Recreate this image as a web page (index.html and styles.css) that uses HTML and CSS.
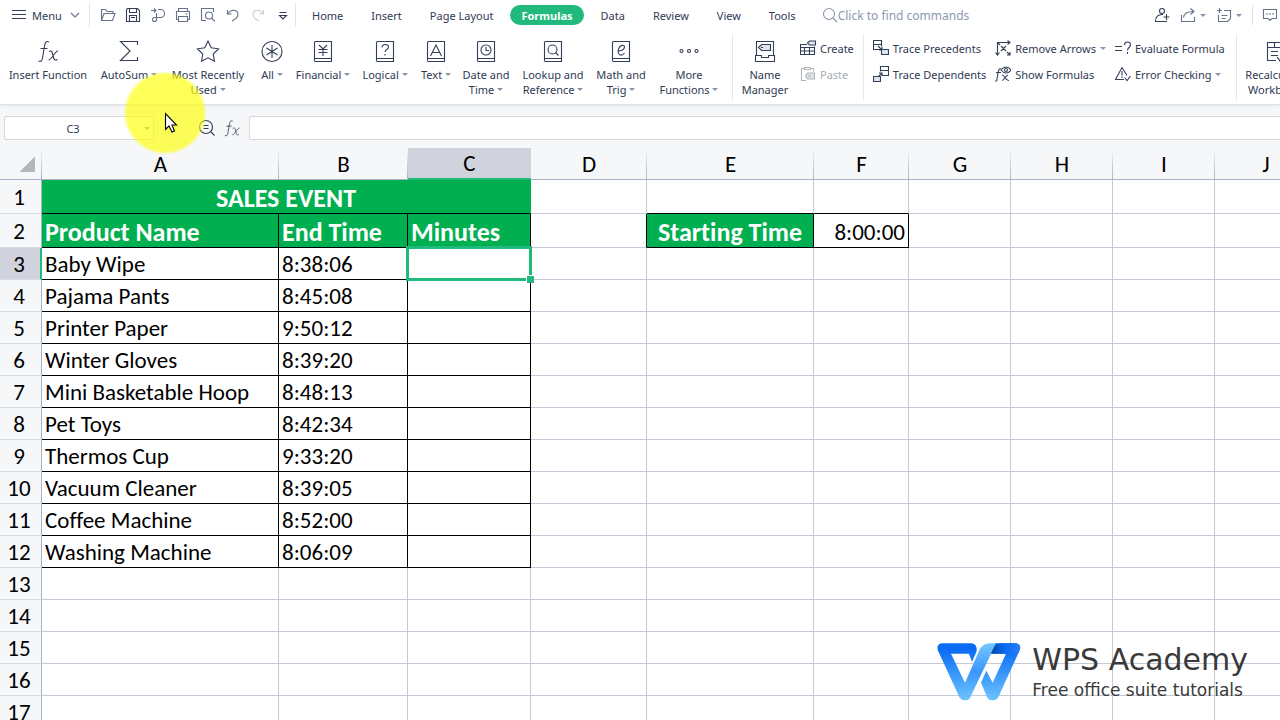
FILE: index.html
```
<!DOCTYPE html>
<html lang="en">
<head>
    <meta charset="UTF-8">
    <meta name="viewport" content="width=device-width, initial-scale=1.0">
    <title>Sales Event</title>
    <link rel="stylesheet" href="styles.css">
</head>
<body>
    <!-- Shared icon shapes -->
    <svg class="defs" aria-hidden="true">
        <symbol id="book" viewBox="0 0 24 24">
            <path d="M3.500 21V3.500a1 1 0 0 1 1-1h16v20h-16a1 1 0 0 1-1-1.500M3.500 19.500h17"/>
        </symbol>
    </svg>

    <header>
        <div class="topbar">
            <button class="menu">
                <svg width="14" height="14" viewBox="0 0 14 14"><path d="M0 2.500h14M0 6.500h14M0 10.500h14"/></svg>
                Menu
                <svg class="soft" width="10" height="10" viewBox="0 0 10 10"><path d="M1 3l4 4 4-4"/></svg>
            </button>
            <div class="quick">
                <button aria-label="Open"><svg class="soft" width="16" height="16" viewBox="0 0 16 16"><path d="M1.500 13.500v-11h4l1.500 2h6v2M1.500 13.500l2.500-7h11l-2.500 7z"/></svg></button>
                <button aria-label="Save"><svg width="16" height="16" viewBox="0 0 16 16"><path d="M1.500 14.500v-12l1-1h10l2 2v11zM4.500 1.500v4h7v-4M4.500 14.500v-6h7v6M6 10.500h4"/></svg></button>
                <button aria-label="Export"><svg class="soft" width="16" height="16" viewBox="0 0 16 16"><path d="M1 3.500h4.500M4 1.500l2 2-2 2M8 2.500h2.500a4 4 0 0 1 0 8H4.500a2 2 0 1 0 2 2V6"/></svg></button>
                <button aria-label="Print"><svg class="soft" width="16" height="16" viewBox="0 0 16 16"><path d="M3.500 4.500v-3h9v3M3.500 12.500h-2v-8h13v8h-2M3.500 9.500h9v5h-9zM10.500 7h2"/></svg></button>
                <button aria-label="Print preview"><svg class="soft" width="16" height="16" viewBox="0 0 16 16"><path d="M6 13.500H1.500v-12h12V5"/><circle cx="9" cy="8.500" r="3.500"/><path d="M11.500 11l3.500 3.500"/></svg></button>
                <button aria-label="Undo"><svg class="soft" width="16" height="16" viewBox="0 0 16 16"><path d="M2.500 3v4h4M3 6.500c3-5 10-4 10 1 0 3-3 5-6 6.500"/></svg></button>
                <button aria-label="Redo" disabled><svg class="faded" width="16" height="16" viewBox="0 0 16 16"><path d="M13.500 3v4h-4M13 6.500c-3-5-10-4-10 1 0 3 3 5 6 6.500"/></svg></button>
                <button aria-label="Customize toolbar"><svg width="16" height="16" viewBox="0 0 16 16"><path d="M4.500 5.500h7M4.500 8.500h7L8 12z"/></svg></button>
            </div>
            <nav class="tabs">
                <button>Home</button>
                <button>Insert</button>
                <button>Page Layout</button>
                <button class="active">Formulas</button>
                <button>Data</button>
                <button>Review</button>
                <button>View</button>
                <button>Tools</button>
            </nav>
            <label class="search">
                <svg width="16" height="16" viewBox="0 0 16 16"><circle cx="7" cy="7" r="5.500"/><path d="M11 11l4 4"/></svg>
                <input type="text" placeholder="Click to find commands" aria-label="Find commands">
            </label>
            <div class="share">
                <button aria-label="Add user"><svg width="16" height="16" viewBox="0 0 16 16"><circle cx="8" cy="4" r="2.500"/><path d="M9 7.500C4 7 1.500 10 1.500 14.500H13M12.500 7v6M9.500 10h6"/></svg></button>
                <button aria-label="Share"><svg class="soft" width="16" height="16" viewBox="0 0 16 16"><path d="M1.500 8v6.500h13V10M3.500 10.500c.500-4 4-6 10-6M10.500 1.500l3.500 3-3.500 3"/></svg><i class="arrow"></i></button>
                <button aria-label="Add note"><svg class="soft" width="16" height="16" viewBox="0 0 16 16"><path d="M1 3.500h5M3.500 1v5M8 3.500h6.500v8l-3 3h-9V8M5.500 8.500h6M5.500 11.500h4"/></svg><i class="arrow"></i></button>
                <button class="chat" aria-label="Comments"><svg class="soft" width="16" height="16" viewBox="0 0 16 16"><path d="M1.500 2.500h13v9H10l-2 2-2-2H1.500zM4 7h2M7 7h2M10 7h2"/></svg></button>
            </div>
        </div>

        <div class="ribbon">
            <button class="tool w96">
                <svg width="24" height="24" viewBox="0 0 24 24"><path d="M13 3c-3-1.500-4 1-4.500 4L6.500 19c-.500 3-1.500 4-4 3M4.500 9.500h7M13 12.500c3-1.500 3 0 4 4s1.500 5.500 4.500 4M22 12c-3 0-6 8.500-9.500 9"/></svg>
                <span>Insert Function</span>
            </button>
            <button class="tool w66">
                <svg width="24" height="24" viewBox="0 0 24 24"><path d="M20.500 6V2.500h-17L13 12 3.500 21.500h17V18"/></svg>
                <span>AutoSum <i class="arrow"></i></span>
            </button>
            <button class="tool w92">
                <svg width="24" height="24" viewBox="0 0 24 24"><path d="M12 2l3.200 6.800 7.300 1-5.300 5.200 1.300 7.300L12 18.800l-6.500 3.500 1.300-7.300L1.500 9.800l7.300-1z"/></svg>
                <span>Most Recently<br>Used <i class="arrow"></i></span>
            </button>
            <button class="tool w36">
                <svg width="24" height="24" viewBox="0 0 24 24"><circle cx="12" cy="12.500" r="10"/><path d="M12 6v13M6.500 9l11 7M17.500 9l-11 7"/></svg>
                <span>All <i class="arrow"></i></span>
            </button>
            <button class="tool w66">
                <svg width="24" height="24" viewBox="0 0 24 24"><use href="#book"/><path d="M8 6l4 4L16 6M12 10v7M7.500 10.500h9M7.500 13.500h9"/></svg>
                <span>Financial <i class="arrow"></i></span>
            </button>
            <button class="tool w58">
                <svg width="24" height="24" viewBox="0 0 24 24"><use href="#book"/><path d="M9 8.500c0-4 6.500-4 6.500-.5 0 2.500-3.500 2.500-3.500 5M12 15v1.500"/></svg>
                <span>Logical <i class="arrow"></i></span>
            </button>
            <button class="tool w44">
                <svg width="24" height="24" viewBox="0 0 24 24"><use href="#book"/><path d="M6.500 17L12 6l5.500 11M8.500 13.500h7"/></svg>
                <span>Text <i class="arrow"></i></span>
            </button>
            <button class="tool w56">
                <svg width="24" height="24" viewBox="0 0 24 24"><use href="#book"/><circle cx="12" cy="11" r="5"/><path d="M12 8v3.500h3"/></svg>
                <span>Date and<br>Time <i class="arrow"></i></span>
            </button>
            <button class="tool w78">
                <svg width="24" height="24" viewBox="0 0 24 24"><use href="#book"/><circle cx="11.500" cy="10.500" r="4.500"/><path d="M14.500 13.500l3 3"/></svg>
                <span>Lookup and<br>Reference <i class="arrow"></i></span>
            </button>
            <button class="tool w58">
                <svg width="24" height="24" viewBox="0 0 24 24"><use href="#book"/><path d="M9 12c3.500 0 6.500-1.500 6.500-4 0-3-5-2-6 2-1.500 6 3 8 6 4"/></svg>
                <span>Math and<br>Trig <i class="arrow"></i></span>
            </button>
            <button class="tool w78">
                <svg width="24" height="24" viewBox="0 0 24 24"><circle cx="4.500" cy="12" r="1.500"/><circle cx="12" cy="12" r="1.500"/><circle cx="19.500" cy="12" r="1.500"/></svg>
                <span>More<br>Functions <i class="arrow"></i></span>
            </button>
            <button class="tool w66 divided name">
                <svg width="24" height="24" viewBox="0 0 24 24"><path d="M3.500 16.500v-14h17v14M2.500 22.500v-6h6v2h7v-2h6v6z"/><path class="fill" d="M5.500 8.500l3-3h9v6h-9z"/><path d="M8 8.500h2"/></svg>
                <span>Name<br>Manager</span>
            </button>
            <div class="pair">
                <button><svg width="16" height="16" viewBox="0 0 16 16"><path d="M7 4.500H.500v10h14v-8M.500 7.500h14M.500 11h14M4.500 7.500v7M9.500 7.500v7"/><path class="fill" d="M7.500 3l2-2h6v4h-6z"/></svg>Create</button>
                <button class="off" disabled><svg width="16" height="16" viewBox="0 0 16 16"><path d="M4.500 2.500h-3v12H6M10.500 2.500h3v3M4.500 1.500h6v2h-6z"/><path class="fill" d="M5.500 10l2-3h7v6h-7z"/><path d="M8 10h3"/></svg>Paste</button>
            </div>
            <div class="pair divided">
                <button><svg width="16" height="16" viewBox="0 0 16 16"><path d="M7.500 9.500h-7v-9h8v6M.500 4.500h8M5 6l4 4M9 7v3H6"/><path class="fill" d="M8.500 9.500h7v5h-7z"/></svg>Trace Precedents</button>
                <button><svg width="16" height="16" viewBox="0 0 16 16"><path d="M7.500 5.500v-5h8v9h-6M7.500 4.500h8M5 11l4-4M6 7h3v3"/><path class="fill" d="M.500 10.500h7v5h-7z"/></svg>Trace Dependents</button>
            </div>
            <div class="pair">
                <button><svg width="16" height="16" viewBox="0 0 16 16"><path d="M2.500 15V2.500H15M.500 12.500l2 2.500 2-2.500M12.500.500l2.500 2-2.500 2M6 6l5 5M11 6l-5 5M3 3l2 2M12 12l3 3M15 12v3h-3"/></svg>Remove Arrows <i class="arrow"></i></button>
                <button><svg width="16" height="16" viewBox="0 0 16 16"><path d="M6 3c-2-1-2.500 1-3 4l-1 6c0 2-1 2.500-2 2M1 6.500h5M7 9c3 0 3 6 7 5.500M13 9c-2 0-4 5.500-6 5.500M6 4c3-4 7-4 10 0-3 4-7 4-10 0z"/><circle cx="11" cy="4" r="1.500"/></svg>Show Formulas</button>
            </div>
            <div class="pair">
                <button><svg width="16" height="16" viewBox="0 0 16 16"><path d="M0 6.500h7M0 10.500h7M9.500 5c0-4 6-4 6-.500 0 3-3 3-3 6M12.500 12v2"/></svg>Evaluate Formula</button>
                <button><svg width="16" height="16" viewBox="0 0 16 16"><path d="M9 13.500H.500L7 1.500l5 8M7 5v4.500M7 10.500V12M9.500 11.500l2.500 3 3.500-4.500"/></svg>Error Checking <i class="arrow"></i></button>
            </div>
            <button class="tool w78 divided recalc">
                <svg width="24" height="24" viewBox="0 0 24 24"><path d="M13 21.500H4.500v-18h18v8M4.500 8.500h18M11.500 3.500v5M8 12.500h7M8 16.500h7M14 18l3 4 6-8"/></svg>
                <span>Recalculate<br>Workbook</span>
            </button>
        </div>
    </header>

    <div class="formula-bar">
        <div class="name-box">
            <input type="text" value="C3" aria-label="Name box">
            <i class="arrow"></i>
        </div>
        <button aria-label="Zoom out"><svg width="18" height="18" viewBox="0 0 18 18"><circle cx="8" cy="8" r="6.500"/><path d="M5.500 6.500h5M5.500 9.500h5M12.500 12.500l4 4"/></svg></button>
        <button aria-label="Insert function"><svg width="18" height="18" viewBox="0 0 24 24"><path d="M13 3c-3-1.500-4 1-4.500 4L6.500 19c-.500 3-1.500 4-4 3M4.500 9.500h7M13 12.500c3-1.500 3 0 4 4s1.500 5.500 4.500 4M22 12c-3 0-6 8.500-9.500 9"/></svg></button>
        <input class="formula" type="text" aria-label="Formula">
    </div>

    <main>
        <table>
            <colgroup>
                <col class="col-num"><col class="col-a"><col class="col-b"><col class="col-c"><col class="col-d"><col class="col-e"><col class="col-f"><col class="col-g"><col class="col-g"><col class="col-g"><col class="col-g">
            </colgroup>
            <thead>
                <tr><th class="corner"></th><th>A</th><th>B</th><th class="current">C</th><th>D</th><th>E</th><th>F</th><th>G</th><th>H</th><th>I</th><th>J</th></tr>
            </thead>
            <tbody>
                <tr class="tall"><th>1</th><td class="green title" colspan="3">SALES EVENT</td><td></td><td class="line-b"></td><td class="line-b"></td><td></td><td></td><td></td><td></td></tr>
                <tr class="tall"><th>2</th><td class="green">Product Name</td><td class="green">End Time</td><td class="green">Minutes</td><td class="line-r"></td><td class="green center">Starting Time</td><td class="box right">8:00:00</td><td></td><td></td><td></td><td></td></tr>
                <tr><th class="current">3</th><td class="box">Baby Wipe</td><td class="box">8:38:06</td><td class="box selected"></td><td></td><td></td><td></td><td></td><td></td><td></td><td></td></tr>
                <tr><th>4</th><td class="box">Pajama Pants</td><td class="box">8:45:08</td><td class="box"></td><td></td><td></td><td></td><td></td><td></td><td></td><td></td></tr>
                <tr><th>5</th><td class="box">Printer Paper</td><td class="box">9:50:12</td><td class="box"></td><td></td><td></td><td></td><td></td><td></td><td></td><td></td></tr>
                <tr><th>6</th><td class="box">Winter Gloves</td><td class="box">8:39:20</td><td class="box"></td><td></td><td></td><td></td><td></td><td></td><td></td><td></td></tr>
                <tr><th>7</th><td class="box">Mini Basketable Hoop</td><td class="box">8:48:13</td><td class="box"></td><td></td><td></td><td></td><td></td><td></td><td></td><td></td></tr>
                <tr><th>8</th><td class="box">Pet Toys</td><td class="box">8:42:34</td><td class="box"></td><td></td><td></td><td></td><td></td><td></td><td></td><td></td></tr>
                <tr><th>9</th><td class="box">Thermos Cup</td><td class="box">9:33:20</td><td class="box"></td><td></td><td></td><td></td><td></td><td></td><td></td><td></td></tr>
                <tr><th>10</th><td class="box">Vacuum Cleaner</td><td class="box">8:39:05</td><td class="box"></td><td></td><td></td><td></td><td></td><td></td><td></td><td></td></tr>
                <tr><th>11</th><td class="box">Coffee Machine</td><td class="box">8:52:00</td><td class="box"></td><td></td><td></td><td></td><td></td><td></td><td></td><td></td></tr>
                <tr><th>12</th><td class="box">Washing Machine</td><td class="box">8:06:09</td><td class="box"></td><td></td><td></td><td></td><td></td><td></td><td></td><td></td></tr>
                <tr><th>13</th><td></td><td></td><td></td><td></td><td></td><td></td><td></td><td></td><td></td><td></td></tr>
                <tr><th>14</th><td></td><td></td><td></td><td></td><td></td><td></td><td></td><td></td><td></td><td></td></tr>
                <tr><th>15</th><td></td><td></td><td></td><td></td><td></td><td></td><td></td><td></td><td></td><td></td></tr>
                <tr><th>16</th><td></td><td></td><td></td><td></td><td></td><td></td><td></td><td></td><td></td><td></td></tr>
                <tr><th>17</th><td></td><td></td><td></td><td></td><td></td><td></td><td></td><td></td><td></td><td></td></tr>
            </tbody>
        </table>
    </main>

    <!-- Logo over the sheet -->
    <div class="brand">
        <svg width="84" height="58" viewBox="50 38 252 174">
            <defs>
                <linearGradient id="blue" x1="0" y1="0" x2="0" y2="1">
                    <stop offset="0.1" stop-color="#0a6cf5"/>
                    <stop offset="1" stop-color="#6cc4ff"/>
                </linearGradient>
                <linearGradient id="sky" x1="0" y1="0" x2="0" y2="1">
                    <stop offset="0" stop-color="#74c8ff"/>
                    <stop offset="0.5" stop-color="#3c96fb"/>
                    <stop offset="1" stop-color="#6cc4ff"/>
                </linearGradient>
                <linearGradient id="fold" x1="0" y1="0" x2="1" y2="0">
                    <stop offset="0" stop-color="#0447a6"/>
                    <stop offset="0.5" stop-color="#0a6cf5"/>
                    <stop offset="1" stop-color="#2a80f6"/>
                </linearGradient>
            </defs>
            <path fill="url(#blue)" d="M64 39H152Q164 39 168 50Q171 58 167 67L155 95L146 70H92L134 157L150 200Q146 210 134 210Q123 210 118 202L53 61Q47 42 64 39Z"/>
            <path fill="url(#sky)" d="M134 157L176 62Q186 39 208 39H246Q226 42 218 58L149 202Q144 210 134 210L122 184Z"/>
            <path fill="url(#blue)" d="M212 70L226 39H288Q304 43 298 60L233 202Q228 210 217 210Q206 210 201 202L182 157L198 121L217 157L257 70Z"/>
            <path fill="url(#fold)" d="M212 70L218 57Q226 39 246 39H288Q304 43 298 60L293 70Z"/>
        </svg>
        <div>
            <p class="brand-name">WPS Academy</p>
            <p class="brand-line">Free office suite tutorials</p>
        </div>
    </div>

    <!-- Mouse pointer with highlight -->
    <div class="spot"></div>
    <svg class="pointer" width="14" height="22" viewBox="0 0 14 22"><path d="M1.500 1.500v16l3.500-3.500 3 6 2.500-1-2.500-6h4.500z"/></svg>
</body>
</html>
```

FILE: styles.css
```
* {
    box-sizing: border-box;
}

body {
    margin: 0;
    height: 100vh;
    overflow: hidden;
    position: relative;
    display: flex;
    flex-direction: column;
    background: #f5f7f9;
    color: #2f3a52;
    font-family: "Noto Sans", "Open Sans", sans-serif;
    font-size: 11px;
}

button, input {
    font: inherit;
    color: inherit;
    border: none;
    background: none;
    padding: 0;
    margin: 0;
}

button {
    flex-shrink: 0;
    white-space: nowrap;
}

svg {
    flex-shrink: 0;
    fill: none;
    stroke: #333f57;
    stroke-width: 1.1;
}

.defs {
    position: absolute;
    width: 0;
    height: 0;
}

.soft {
    stroke: #66718a;
}

.faded {
    stroke: #ccd0d6;
}

.fill {
    fill: #dfe4ea;
}

.arrow {
    display: inline-block;
    border: 3px solid transparent;
    border-top-color: #8793aa;
    border-bottom: none;
    vertical-align: 3px;
}

header {
    background: #fff;
    border-bottom: 1px solid #e0e1e3;
    box-shadow: 0 1px 3px #e2e4e7;
}

/* Top bar */
.topbar {
    display: flex;
    align-items: center;
    height: 30px;
}

.menu {
    display: flex;
    align-items: center;
    gap: 6px;
    width: 90px;
    height: 24px;
    padding-left: 12px;
    border-right: 1px solid #e0e2e6;
}

.menu .soft {
    margin-left: 2px;
}

.quick {
    display: flex;
    align-items: center;
    height: 24px;
    padding-left: 5px;
    border-right: 1px solid #e0e2e6;
}

.quick button {
    display: flex;
    justify-content: center;
    width: 25px;
}

.tabs {
    display: flex;
    gap: 6px;
    padding-left: 5px;
}

.tabs button {
    height: 20px;
    padding: 0 11px;
    border-radius: 10px;
}

.tabs .active {
    background: #21ba7c;
    color: #fff;
    font-weight: bold;
}

.search {
    display: flex;
    align-items: center;
    margin-left: 15px;
    font-size: 12px;
}

.search svg {
    stroke: #8d98b0;
}

.search input {
    width: 160px;
}

.search input::placeholder {
    color: #8d98b0;
}

.share {
    display: flex;
    align-items: center;
    gap: 10px;
    margin-left: auto;
}

.share button {
    display: flex;
    align-items: center;
    gap: 4px;
}

.share .chat {
    height: 20px;
    padding: 0 2px 0 9px;
    border-left: 1px solid #e0e2e6;
}

/* Ribbon */
.ribbon {
    display: flex;
    height: 74px;
    overflow: hidden;
}

.tool {
    display: flex;
    flex-direction: column;
    align-items: center;
    gap: 4px;
    padding-top: 9px;
    line-height: 15px;
}

.w96 { width: 96px; }
.w92 { width: 92px; }
.w78 { width: 78px; }
.w66 { width: 66px; }
.w58 { width: 58px; }
.w56 { width: 56px; }
.w44 { width: 44px; }
.w36 { width: 36px; }

.divided {
    background: linear-gradient(#e6e8eb, #e6e8eb) left center / 1px 66px no-repeat;
}

.name {
    margin-left: 4px;
}

.pair {
    display: flex;
    flex-direction: column;
    flex-shrink: 0;
    padding: 5px 0 0 2px;
}

.pair.divided {
    margin-left: 9px;
    padding-left: 10px;
}

.pair + .pair:not(.divided) {
    padding-left: 9px;
}

.pair button {
    display: flex;
    align-items: center;
    gap: 4px;
    height: 26px;
}

.pair .off {
    color: #a9adb4;
}

.off svg {
    stroke: #b0b4ba;
}

.recalc {
    margin-left: 11px;
}

/* Formula bar */
.formula-bar {
    display: flex;
    align-items: center;
    height: 43px;
    padding: 3px 0 0 4px;
}

.name-box {
    display: flex;
    align-items: center;
    width: 150px;
    height: 24px;
    margin-right: 44px;
    background: #fff;
    border: 1px solid #d5d8dd;
    border-radius: 2px;
}

.name-box input {
    width: 136px;
    text-align: center;
}

.name-box .arrow {
    margin-left: 3px;
}

.formula-bar button {
    display: flex;
    width: 25px;
}

.formula {
    flex: 1;
    height: 24px;
    margin-left: 1px;
    background: #fff;
    border: 1px solid #d5d8dd;
    border-right: none;
    border-radius: 2px 0 0 2px;
}

/* Sheet */
main {
    flex: 1;
    overflow: hidden;
    background: #fff;
}

table {
    width: 1317px;
    table-layout: fixed;
    border-collapse: separate;
    border-spacing: 0;
    font-family: Carlito, Lato, sans-serif;
    font-size: 23px;
    font-variant-ligatures: none;
    line-height: 24px;
    color: #000;
}

.col-num { width: 42px; }
.col-a { width: 237px; }
.col-b { width: 129px; }
.col-c { width: 123px; }
.col-d { width: 116px; }
.col-e { width: 167px; }
.col-f { width: 95px; }
.col-g { width: 102px; }

tr {
    height: 32px;
}

.tall {
    height: 34px;
}

th {
    padding: 0;
    font-weight: normal;
    border-bottom: 1px solid #a9b3c6;
    background: linear-gradient(#f5f7f9, #a9b3c6) right top / 1px 100% no-repeat #f5f7f9;
}

thead .current {
    background: #d0d3dc;
    border-bottom: 2px solid #21ba7c;
}

tbody th {
    padding-right: 3px;
    background: #f5f7f9;
    border-bottom-color: #d5dae3;
    border-right: 1px solid #a9b3c6;
}

tbody .current {
    padding-right: 2px;
    background: #d0d3dc;
    border-right: 2px solid #21ba7c;
}

.corner {
    background: linear-gradient(135deg, transparent 50%, #b4b6b9 50%) right 7px bottom 7px / 15px 15px no-repeat,
        linear-gradient(#f5f7f9, #a9b3c6) right top / 1px 100% no-repeat #f5f7f9;
}

td {
    padding: 0 3px;
    border-right: 1px solid #c3cad8;
    border-bottom: 1px solid #c3cad8;
    white-space: nowrap;
}

.tall td {
    padding-top: 2px;
}

td.box, td.green {
    border-color: #000;
}

td.green {
    background: #00b050;
    color: #fff;
    font-size: 26px;
    font-weight: bold;
}

td.title {
    text-align: center;
    border-right-color: #00b050;
}

td.line-b {
    border-bottom-color: #000;
}

td.line-r {
    border-right-color: #000;
}

td.center {
    text-align: center;
}

td.right {
    text-align: right;
}

.selected {
    position: relative;
}

/* Selection frame and its fill handle */
.selected::before {
    content: "";
    position: absolute;
    inset: -2px;
    border: 3px solid #21ba7c;
}

.selected::after {
    content: "";
    position: absolute;
    right: -4px;
    bottom: -4px;
    width: 7px;
    height: 7px;
    background: #21ba7c;
    border: 1px solid #fff;
    border-right: none;
    border-bottom: none;
}

/* Brand */
.brand {
    position: absolute;
    right: 32px;
    bottom: 18px;
    display: flex;
    align-items: center;
    gap: 11px;
    font-family: "DejaVu Sans", sans-serif;
    color: #3a3a3a;
}

.brand svg {
    stroke: none;
}

.brand p {
    margin: 0;
    white-space: nowrap;
}

.brand-name {
    font-size: 30px;
    line-height: 36px;
}

.brand-line {
    font-size: 17px;
    line-height: 24px;
}

/* Pointer */
.spot {
    position: absolute;
    left: 123px;
    top: 71px;
    width: 84px;
    height: 84px;
    border-radius: 50%;
    background: radial-gradient(closest-side, rgba(255, 255, 0, 0.65) 90%, rgba(255, 255, 0, 0));
    pointer-events: none;
}

.pointer {
    position: absolute;
    left: 164px;
    top: 112px;
    fill: #fff;
    stroke: #000;
    pointer-events: none;
}
```
